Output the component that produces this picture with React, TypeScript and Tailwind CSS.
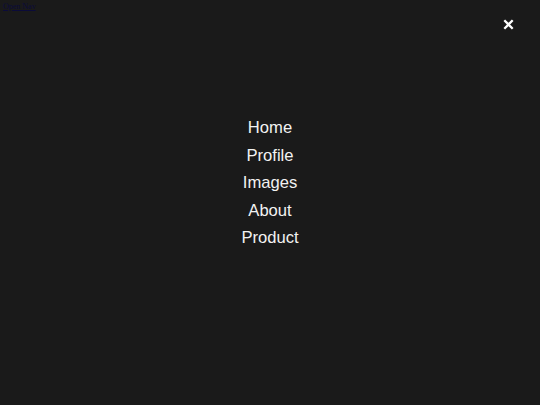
import React from 'react';

const links = ['Home', 'Profile', 'Images', 'About', 'Product'];

const App = () => {
  return (
    <div className="relative w-[540px] h-[405px] bg-[#1a1a1a] overflow-hidden">
      <a
        href="#"
        className="absolute left-[3px] top-[1px] text-[8px] leading-[12px] text-[#0b0b3a] underline"
        style={{ fontFamily: '"Liberation Serif", serif' }}
      >
        Open Nav
      </a>
      <button className="absolute left-[503px] top-[19px] w-[11px] h-[11px] flex items-center justify-center">
        <svg width="11" height="11" viewBox="0 0 11 11">
          <path d="M1.3 1.3 L9.7 9.7 M9.7 1.3 L1.3 9.7" stroke="#ffffff" strokeWidth="2.3" />
        </svg>
      </button>
      <nav
        className="flex flex-col items-center pt-[114px]"
        style={{ fontFamily: '"Liberation Sans", Arial, sans-serif' }}
      >
        {links.map((l) => (
          <a key={l} href="#" className="text-[16.6px] leading-[27.5px] text-[#f2f2f2]">
            {l}
          </a>
        ))}
      </nav>
    </div>
  );
};

export default App;
